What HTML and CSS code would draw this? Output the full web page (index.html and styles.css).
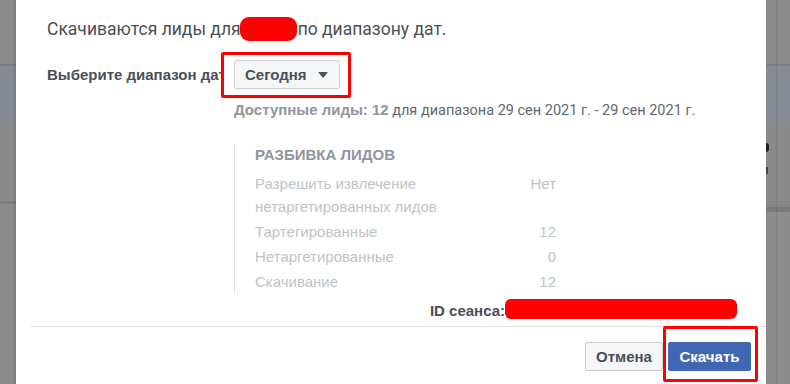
FILE: index.html
```html
<!DOCTYPE html>
<html lang="ru">
<head>
  <meta charset="UTF-8" />
  <meta name="viewport" content="width=device-width, initial-scale=1.0" />
  <title>Скачивание лидов</title>
  <link rel="stylesheet" href="styles.css">
</head>
<body>
  <div class="side left"></div>

  <div class="modal">
    <div class="body">
      <div class="title">Скачиваются лиды для <span class="blob blob-name"></span> по диапазону дат.</div>

      <div class="range-row">
        <div class="range-label">Выберите диапазон дат</div>
        <button class="select">Сегодня <span class="caret"></span></button>
      </div>

      <div class="details">
        <div class="available"><b>Доступные лиды: 12</b> для диапазона 29 сен 2021 г. - 29 сен 2021 г.</div>

        <div class="breakdown">
          <div class="breakdown-head">РАЗБИВКА ЛИДОВ</div>
          <div class="row row-first"><span>Разрешить извлечение<br>нетаргетированных лидов</span><span>Нет</span></div>
          <div class="row"><span>Тартегированные</span><span>12</span></div>
          <div class="row"><span>Нетаргетированные</span><span>0</span></div>
          <div class="row"><span>Скачивание</span><span>12</span></div>
        </div>
      </div>

      <div class="session">
        <b>ID сеанса:</b><span class="blob blob-id"></span>
      </div>
    </div>

    <div class="footer">
      <button class="btn">Отмена</button>
      <button class="btn primary">Скачать</button>
    </div>
  </div>

  <div class="side right">
    <span class="mark m1"></span>
    <span class="mark m2"></span>
  </div>

  <!-- красные рамки поверх скриншота -->
  <div class="callout callout-select"></div>
  <div class="callout callout-download"></div>
</body>
</html>
```

FILE: styles.css
```css
body {
  margin: 0;
  height: 384px;
  display: flex;
  flex-direction: row;
  overflow: hidden;
  position: relative;
  font-family: "Liberation Sans", Arial, sans-serif;
  background: #8a8a8a;
}

.side {
  height: 100%;
  position: relative;
  background:
    linear-gradient(to bottom,
      #8b8b8b 0, #8b8b8b 64px,
      #7b7b7b 64px, #7b7b7b 66px,
      #868a93 66px, #868a93 124px,
      #8a8a8a 124px, #8a8a8a 201px,
      #7c7c7c 201px, #7c7c7c 204px,
      #8b8b8b 204px);
}

.left {
  width: 16px;
}

.left::after {
  content: "";
  position: absolute;
  top: 0;
  right: 0;
  width: 3px;
  height: 100%;
  background: rgba(0, 0, 0, 0.08);
}

.right {
  width: 24px;
  background:
    linear-gradient(to right, transparent 0, transparent 10px, rgba(0,0,0,0.08) 10px, rgba(0,0,0,0.08) 11px, transparent 11px),
    linear-gradient(to bottom,
      #8b8b8b 0, #8b8b8b 64px,
      #7f7f7f 64px, #7f7f7f 66px,
      #878b94 66px, #878b94 124px,
      #8a8a8a 124px, #8a8a8a 201px,
      #858585 201px, #858585 207px,
      #7b7b7b 207px, #7b7b7b 212px,
      #8c8c8c 212px);
}

.mark {
  position: absolute;
  left: 0;
  width: 2px;
  background: #222;
}

.m1 { top: 143px; height: 9px; border-radius: 0 3px 3px 0; width: 3px; }
.m2 { top: 167px; height: 7px; background: #444; }

.modal {
  width: 750px;
  background: #fff;
  display: flex;
  flex-direction: column;
}

.body {
  padding: 17px 15px 0 31px;
}

.title {
  font-family: Roboto, "Liberation Sans", sans-serif;
  font-size: 17.5px;
  line-height: 24px;
  color: #4b4f56;
  display: flex;
  align-items: center;
  white-space: nowrap;
}

.blob {
  display: inline-block;
  background: #ff0000;
}

.blob-name {
  width: 57px;
  height: 24px;
  border-radius: 9px;
  margin: 0 1px 0 -1px;
}

.range-row {
  display: flex;
  align-items: center;
  margin-top: 19px;
  height: 29px;
}

.range-label {
  width: 174px;
  margin-right: 13px;
  overflow: hidden;
  white-space: nowrap;
  font-weight: bold;
  font-size: 15px;
  color: #4b4f56;
}

.select {
  width: 106px;
  height: 29px;
  padding: 0 11px 0 10px;
  display: flex;
  align-items: center;
  justify-content: space-between;
  font-family: "Liberation Sans", Arial, sans-serif;
  font-weight: bold;
  font-size: 15px;
  color: #4b4f56;
  background: #f5f6f7;
  border: 1px solid #ccd0d5;
  border-radius: 2px;
}

.caret {
  width: 0;
  height: 0;
  border-left: 5px solid transparent;
  border-right: 5px solid transparent;
  border-top: 6px solid #4b4f56;
  border-radius: 1px;
}

.details {
  margin-left: 187px;
}

.available {
  margin-top: 12px;
  line-height: 18px;
  font-family: Roboto, "Liberation Sans", sans-serif;
  font-size: 14.5px;
  color: #606770;
  white-space: nowrap;
}

.available b {
  font-family: "Liberation Sans", Arial, sans-serif;
  font-size: 15px;
  color: #90949c;
}

.breakdown {
  margin-top: 24px;
  width: 301px;
  padding-left: 20px;
  border-left: 1px solid #e4e6e9;
  font-size: 15px;
  color: #bec3c9;
  padding-bottom: 1px;
}

.breakdown-head {
  line-height: 22px;
  font-weight: bold;
  color: #90949c;
}

.row {
  display: flex;
  justify-content: space-between;
  line-height: 23px;
  margin-bottom: 2px;
}

.row-first {
  margin-top: 6px;
}

.row:last-child {
  margin-bottom: 0;
}

.session {
  display: flex;
  justify-content: flex-end;
  align-items: center;
  margin-top: 5px;
  margin-right: 14px;
  height: 22px;
  font-size: 15px;
  color: #4b4f56;
}

.blob-id {
  width: 232px;
  height: 20px;
  border-radius: 6px;
  margin-top: -3px;
}

.footer {
  margin: 5px 0 0 15px;
  border-top: 1px solid #dddfe2;
  padding: 15px 15px 0 0;
  display: flex;
  justify-content: flex-end;
  gap: 5px;
}

.btn {
  height: 29px;
  width: 78px;
  padding: 0;
  font-family: "Liberation Sans", Arial, sans-serif;
  font-weight: bold;
  font-size: 15px;
  color: #4b4f56;
  background: #f5f6f7;
  border: 1px solid #ccd0d5;
  border-radius: 2px;
}

.btn.primary {
  width: 83px;
  color: #fff;
  background: #4267b2;
  border-color: #4267b2;
}

.callout {
  position: absolute;
  border: 3px solid #ff0000;
  box-sizing: border-box;
  border-radius: 2px;
}

.callout-select {
  left: 221px;
  top: 52px;
  width: 130px;
  height: 46px;
}

.callout-download {
  left: 663px;
  top: 326px;
  width: 95px;
  height: 56px;
}
```
